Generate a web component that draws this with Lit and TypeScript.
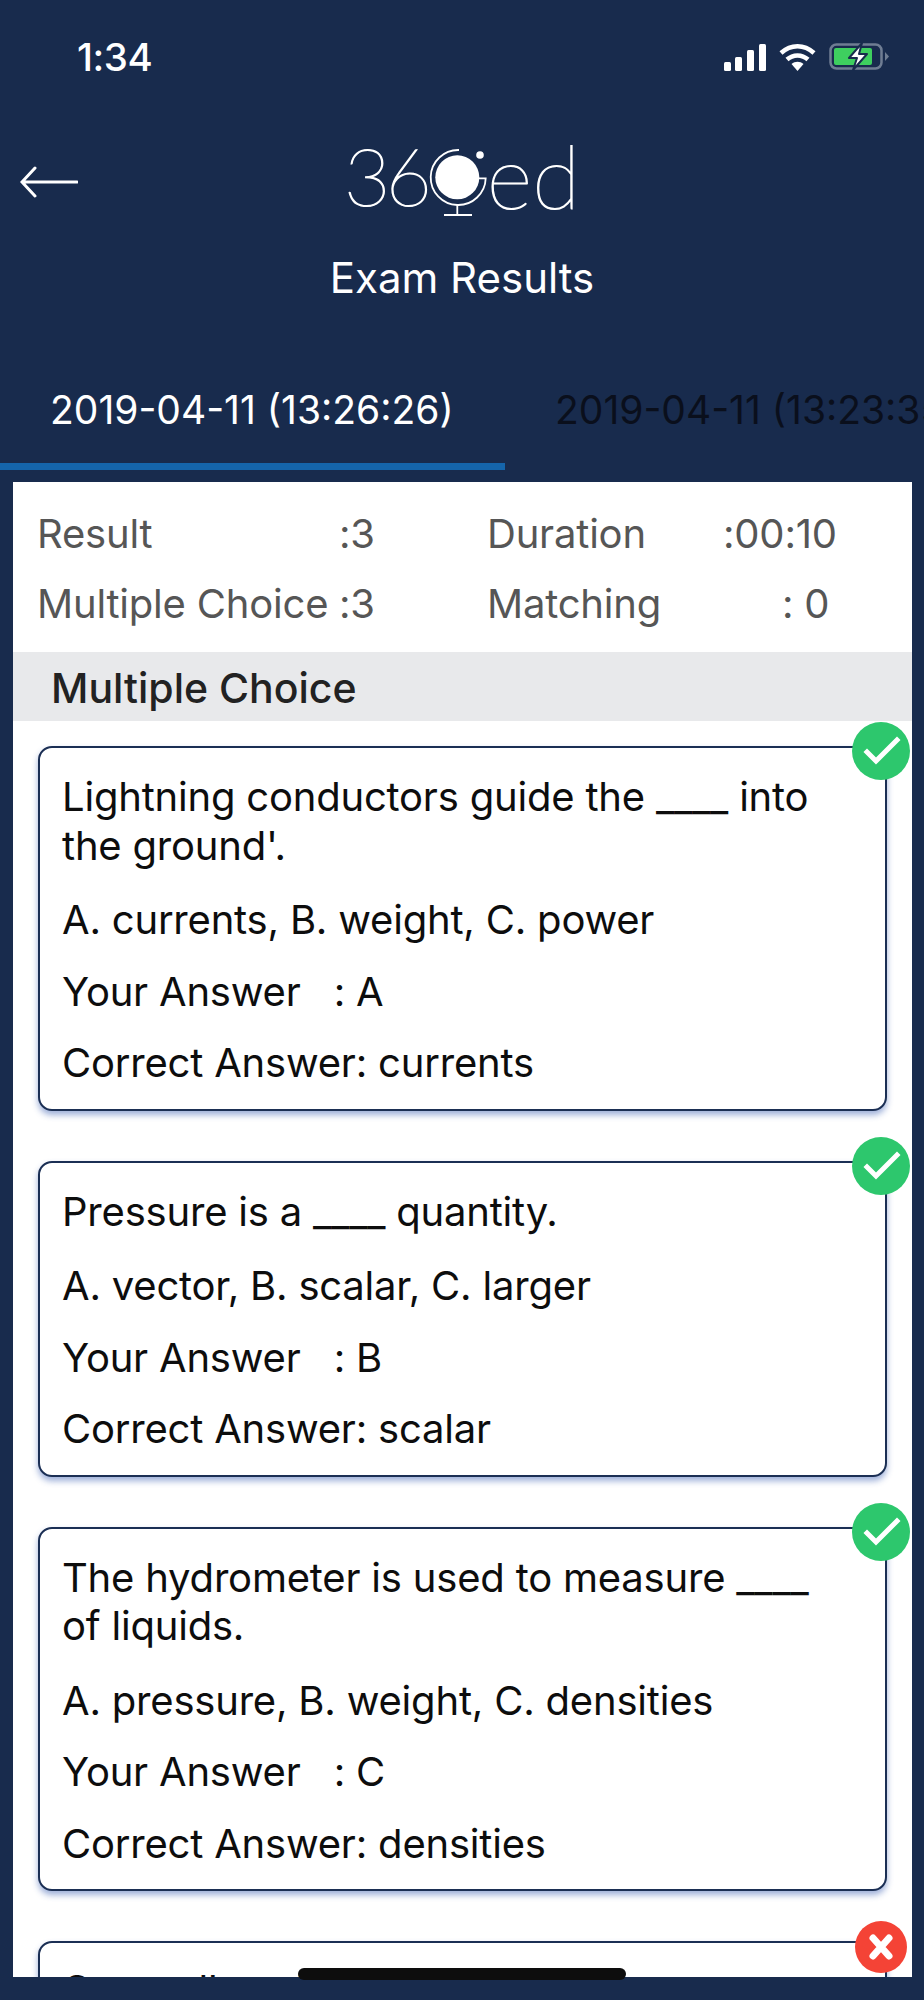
import { LitElement, html, css, svg } from "lit";
import { customElement } from "lit/decorators.js";

interface Q {
  lines: string;
  options: string;
  yours: string;
  correct: string;
}

const QUESTIONS: Q[] = [
  {
    lines: "Lightning conductors guide the ____ into the ground'.",
    options: "A. currents, B. weight, C. power",
    yours: "A",
    correct: "currents",
  },
  {
    lines: "Pressure is a ____ quantity.",
    options: "A. vector, B. scalar, C. larger",
    yours: "B",
    correct: "scalar",
  },
  {
    lines: "The hydrometer is used to measure ____ of liquids.",
    options: "A. pressure, B. weight, C. densities",
    yours: "C",
    correct: "densities",
  },
];

const check = svg`<path d="M15 30 L24 39 L45 18" fill="none" stroke="#fff" stroke-width="5" stroke-linecap="square"></path>`;
const cross = svg`<path d="M18 17 L34 35 M34 17 L18 35" fill="none" stroke="#fff" stroke-width="7" stroke-linecap="round"></path>`;

@customElement("app-root")
export class AppRoot extends LitElement {
  static styles = css`
    :host {
      display: block;
      width: 924px;
      height: 2000px;
      overflow: hidden;
      position: relative;
      background: #182b4d;
      font-family: "Inter", "Liberation Sans", sans-serif;
      color: #fff;
    }
    .status {
      height: 96px;
      display: flex;
      align-items: flex-start;
      justify-content: space-between;
      padding: 35px 35px 0 77px;
      box-sizing: border-box;
    }
    .time {
      font-size: 38.5px;
      font-weight: 500;
      line-height: 44px;
      letter-spacing: -0.4px;
    }
    .status-icons {
      display: flex;
      align-items: center;
      gap: 13px;
      padding-top: 8px;
    }
    .header {
      height: 216px;
      position: relative;
      display: flex;
      flex-direction: column;
      align-items: center;
    }
    .back {
      position: absolute;
      left: 20px;
      top: 70px;
    }
    .logo {
      display: flex;
      align-items: flex-start;
      margin-top: 37px;
      height: 84px;
      font-family: "Lato", sans-serif;
      font-weight: 100;
      font-size: 80px;
      line-height: 84px;
      color: #fff;
      -webkit-text-stroke: 1.2px #fff;
    }
    .digits {
      letter-spacing: -5px;
    }
    .globe {
      margin-top: 12px;
      flex: none;
    }
    .letters {
      font-size: 88px;
    }
    .title {
      font-size: 42px;
      line-height: 46px;
      margin-top: 38px;
    }
    .tabs {
      display: flex;
      height: 170px;
      width: 924px;
      overflow: hidden;
    }
    .tab {
      flex: 0 0 505px;
      height: 158px;
      box-sizing: border-box;
      padding: 75px 0 0 50px;
      font-size: 39px;
      line-height: 46px;
      white-space: nowrap;
    }
    .tab.active {
      color: #fff;
      border-bottom: 7px solid #1565ab;
    }
    .tab.idle {
      color: #0a0f1c;
    }
    .panel {
      margin: 0 12px 0 13px;
      height: 1495px;
      background: #fff;
      overflow: hidden;
    }
    .stats {
      height: 170px;
      box-sizing: border-box;
      padding: 16px 0 0 24px;
      display: grid;
      grid-template-columns: 302px 148px 236px 1fr;
      grid-auto-rows: 70px;
      align-items: center;
      font-size: 40px;
      color: #565656;
      letter-spacing: -0.2px;
    }
    .indent {
      padding-left: 59px;
    }
    .band {
      height: 69px;
      background: #e8e9eb;
      padding-left: 38px;
      font-size: 41px;
      font-weight: 500;
      line-height: 72px;
      color: #222;
      overflow: hidden;
    }
    .cards {
      display: flex;
      flex-direction: column;
      gap: 50px;
      padding: 25px 25px 0 25px;
    }
    .card {
      position: relative;
      border: 2px solid #1b2f54;
      border-radius: 14px;
      box-shadow: 0 4px 6px rgba(40, 80, 170, 0.45);
      padding: 25px 40px 21px 22px;
      display: flex;
      flex-direction: column;
      gap: 23px;
      font-size: 40px;
      line-height: 48.5px;
      color: #0d0d0d;
      letter-spacing: -0.2px;
      background: #fff;
    }
    .question {
      margin-bottom: 3px;
    }
    .clipped {
      margin-top: -2px;
      white-space: nowrap;
    }
    .badge {
      position: absolute;
    }
    .badge.ok {
      width: 58px;
      height: 58px;
      top: -26px;
      right: -25px;
    }
    .badge.bad {
      width: 52px;
      height: 52px;
      top: -22px;
      right: -22px;
    }
    .home {
      position: absolute;
      left: 298px;
      top: 1968px;
      width: 328px;
      height: 12px;
      border-radius: 6px;
      background: #0d0d0d;
    }
  `;

  private renderCard(q: Q) {
    return html`<div class="card">
      <div class="question">${q.lines}</div>
      <div>${q.options}</div>
      <div>Your Answer&nbsp;&nbsp; : ${q.yours}</div>
      <div>Correct Answer: ${q.correct}</div>
      <svg class="badge ok" viewBox="0 0 58 58">
        <circle cx="29" cy="29" r="29" fill="#2dc76d"></circle>
        ${check}
      </svg>
    </div>`;
  }

  render() {
    return html`
      <div class="status">
        <div class="time">1:34</div>
        <div class="status-icons">
          <svg width="42" height="27" viewBox="0 0 42 27">
            <rect x="0" y="18" width="7" height="9" rx="1.5" fill="#fff"></rect>
            <rect x="11" y="13" width="7" height="14" rx="1.5" fill="#fff"></rect>
            <rect x="23" y="6" width="7" height="21" rx="1.5" fill="#fff"></rect>
            <rect x="35" y="0" width="7" height="27" rx="1.5" fill="#fff"></rect>
          </svg>
          <svg width="37" height="27" viewBox="0 0 37 27">
            <path d="M2 9 C12 0 25 0 35 9" fill="none" stroke="#fff" stroke-width="4.5"></path>
            <path d="M8 15.5 C14 10 23 10 29 15.5" fill="none" stroke="#fff" stroke-width="4.5"></path>
            <path d="M12.5 20 C16 17 21 17 24.5 20 L18.5 27 Z" fill="#fff"></path>
          </svg>
          <svg width="60" height="28" viewBox="0 0 60 28">
            <rect x="1.5" y="1.5" width="51" height="24" rx="6" fill="none" stroke="#6f7d93" stroke-width="2.5"></rect>
            <rect x="5" y="5" width="38" height="17" rx="2" fill="#3ecf5f"></rect>
            <path d="M56 9 L60 13.5 L56 18 Z" fill="#6f7d93"></path>
            <path d="M33 0 L20 15 L28 15 L24 27 L38 11 L30 11 Z" fill="#fff" stroke="#182b4d" stroke-width="2" stroke-linejoin="round"></path>
          </svg>
        </div>
      </div>
      <div class="header">
        <svg class="back" width="58" height="32" viewBox="0 0 58 32">
          <path d="M57 16 L3 16 M15 2 L2 16 L15 30" fill="none" stroke="#fff" stroke-width="3" stroke-linecap="round"></path>
        </svg>
        <div class="logo">
          <span class="digits">36</span>
          <svg class="globe" width="60" height="75" viewBox="0 0 60 75">
            <circle cx="30.3" cy="32.3" r="22" fill="#fff"></circle>
            <path d="M32 5 A27.5 27.5 0 1 0 58.7 33.3 L52 33.3" fill="none" stroke="#fff" stroke-width="1.8"></path>
            <circle cx="53" cy="10" r="3.8" fill="#fff"></circle>
            <path d="M30.3 60 V70 M17 70 H45" fill="none" stroke="#fff" stroke-width="1.8"></path>
          </svg>
          <span class="letters">ed</span>
        </div>
        <div class="title">Exam Results</div>
      </div>
      <div class="tabs">
        <div class="tab active">2019-04-11 (13:26:26)</div>
        <div class="tab idle">2019-04-11 (13:23:35)</div>
      </div>
      <div class="panel">
        <div class="stats">
          <div>Result</div><div>:3</div><div>Duration</div><div>:00:10</div>
          <div>Multiple Choice</div><div>:3</div><div>Matching</div><div class="indent">: 0</div>
        </div>
        <div class="band">Multiple Choice</div>
        <div class="cards">
          ${QUESTIONS.map((q) => this.renderCard(q))}
          <div class="card">
            <div class="clipped">Generally solid ____ are ____ of</div>
            <svg class="badge bad" viewBox="0 0 52 52">
              <circle cx="26" cy="26" r="26" fill="#f44336"></circle>
              ${cross}
            </svg>
          </div>
        </div>
      </div>
      <div class="home"></div>
    `;
  }
}
